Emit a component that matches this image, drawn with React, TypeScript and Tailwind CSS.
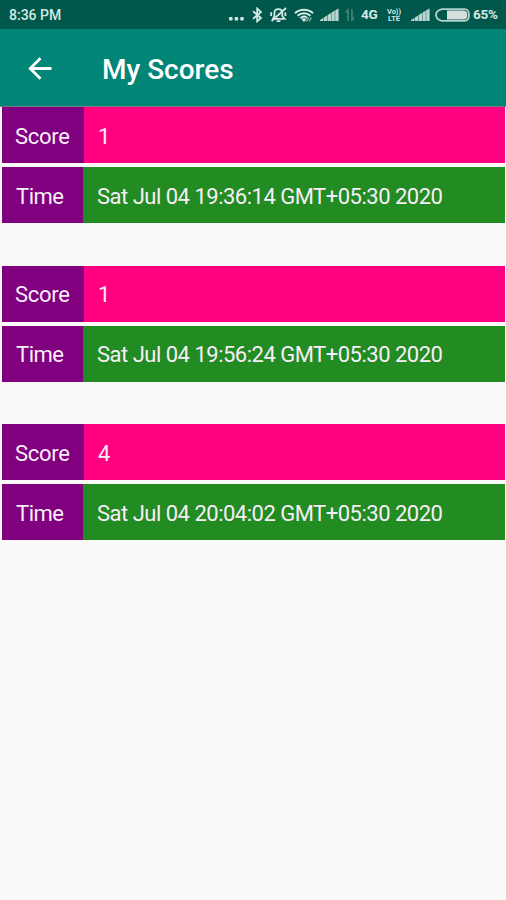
type ScoreEntry = {
  score: number
  time: string
}

const entries: ScoreEntry[] = [
  { score: 1, time: 'Sat Jul 04 19:36:14 GMT+05:30 2020' },
  { score: 1, time: 'Sat Jul 04 19:56:24 GMT+05:30 2020' },
  { score: 4, time: 'Sat Jul 04 20:04:02 GMT+05:30 2020' },
]

function SignalIcon() {
  return (
    <svg className="shrink-0" width="19" height="14" viewBox="0 0 19 14" fill="#b9d5cf">
      <path d="M0 13V12L3.4 10v3z" />
      <path d="M3.8 13V9.5L7.2 7.4V13z" />
      <path d="M7.6 13V7.1L11 5V13z" />
      <path d="M11.4 13V4.7L14.8 2.6V13z" />
      <path d="M15.2 13V2.2L18.6 0.4V13z" />
    </svg>
  )
}

function StatusBar() {
  return (
    <div className="flex h-[29px] items-center bg-[#00574b] pl-[9px] pt-px text-[#d5e8e4]">
      <span className="w-[220px] shrink-0 text-[14px] font-medium leading-none">8:36 PM</span>

      {/* More notifications */}
      <svg className="mr-[8px] shrink-0" width="15" height="14" viewBox="0 0 15 14" fill="currentColor">
        <rect x="0" y="9" width="3.6" height="3.6" rx="1" />
        <rect x="5.6" y="9" width="3.6" height="3.6" rx="1" />
        <rect x="11.2" y="9" width="3.6" height="3.6" rx="1" />
      </svg>

      {/* Bluetooth */}
      <svg className="mr-[7px] shrink-0" width="11" height="16" viewBox="0 0 11 16" fill="none" stroke="currentColor" strokeWidth="1.8">
        <path d="M1 4.2L9 11 5.2 14.4V1.6L9 5 1 11.8" />
      </svg>

      {/* Silent mode */}
      <svg className="mr-[7px] shrink-0" width="17" height="16" viewBox="0 0 17 16" fill="none" stroke="currentColor" strokeWidth="1.8">
        <path d="M3.2 11.3L4.4 9V6.2C4.4 3.5 6 2.2 8.3 2.2S12.3 3.5 12.3 6.2V9L14.6 11.8H3z" />
        <path d="M16 1L1.6 14.2" />
        <path d="M1.2 5.2V9M15.4 5.5V9M6.6 14.2H10.4" />
      </svg>

      {/* Wifi */}
      <svg className="mr-[6px] shrink-0" width="20" height="15" viewBox="0 0 20 15" fill="none" stroke="currentColor">
        <path d="M1 5.2C6 .6 14 .6 19 5.2" strokeWidth="2" />
        <path d="M3.6 7.8C7.4 4.4 12.6 4.4 16.4 7.8" strokeWidth="2" />
        <path d="M6.3 10.3C8.6 8.2 11.4 8.2 13.2 10" strokeWidth="1.8" />
        <path d="M7.6 11.4L10 14l2.4-2.6C11 10 9 10 7.6 11.4z" fill="currentColor" stroke="none" />
        <path d="M12.4 13.5L15 9.5M15 13.5L17.5 9.5" strokeWidth="1.3" opacity=".65" />
      </svg>

      <SignalIcon />

      {/* Data transfer */}
      <svg className="ml-[6px] mr-[6px] shrink-0" width="10" height="14" viewBox="0 0 10 14" fill="none" stroke="#438478" strokeWidth="1.6">
        <path d="M3 13V2L.8 4.6M7 1V12L9.2 9.4" />
      </svg>

      <span className="w-[25px] shrink-0 text-[13.5px] font-bold leading-none tracking-[-0.2px]">4G</span>

      <span className="mr-[9px] flex w-[16px] shrink-0 flex-col items-center text-[7.5px] font-bold leading-[7px]">
        <span className="tracking-[-0.1px]">Vo))</span>
        <span>LTE</span>
      </span>

      <SignalIcon />

      {/* Battery */}
      <svg className="ml-[5px] mr-[3px] shrink-0" width="35" height="14" viewBox="0 0 35 14">
        <path d="M7 1.2H29.5Q34 1.4 34 7T29.5 12.8H7Q1 11.5 1 7T7 1.2z" fill="none" stroke="#b4d2cc" strokeWidth="1.8" />
        <path d="M12 2.6H29Q32.4 3.2 32.4 7T29 11.4H12z" fill="#d5dfdc" />
      </svg>
      <span className="whitespace-nowrap text-[13.5px] font-bold leading-none tracking-[-0.2px]">65%</span>
    </div>
  )
}

function AppBar() {
  return (
    <header className="flex h-[78px] items-center border-b border-[#6f7c80] bg-[#008577] pl-[28px] pt-[2px] text-white">
      <svg width="24" height="24" viewBox="0 0 24 24" fill="none" stroke="currentColor" strokeWidth="2.8">
        <path d="M23.5 11.5H2.5M12.5 1.2L2.2 11.5L12.5 21.8" />
      </svg>
      <h1 className="ml-[50px] pt-[2px] text-[28px] font-medium leading-none">My Scores</h1>
    </header>
  )
}

function ScoreCard({ score, time }: ScoreEntry) {
  return (
    <div className="flex flex-col gap-[4px] text-[22px] leading-none text-[#f8eef8]">
      <div className="flex h-[56px]">
        <div className="flex w-[82px] items-center bg-[#800080] pl-[13px] pt-[3px] tracking-[-0.3px]">Score</div>
        <div className="flex flex-1 items-center bg-[#ff0080] pl-[14px] pt-[3px]">{score}</div>
      </div>
      <div className="flex h-[56px]">
        <div className="flex w-[81px] items-center bg-[#800080] pl-[14px] pt-[3px] tracking-[-0.5px]">Time</div>
        <div className="flex flex-1 items-center whitespace-nowrap bg-[#228b22] pl-[14px] pt-[3px] tracking-[-0.5px]">
          {time}
        </div>
      </div>
    </div>
  )
}

export default function App() {
  return (
    <div className="min-h-screen w-full overflow-hidden bg-[#fafafa] font-['Roboto',sans-serif]">
      <StatusBar />
      <AppBar />
      <main className="flex flex-col gap-[42.4px] pl-[2px] pr-px pt-[0.4px]">
        {entries.map((entry) => (
          <ScoreCard key={entry.time} {...entry} />
        ))}
      </main>
    </div>
  )
}
